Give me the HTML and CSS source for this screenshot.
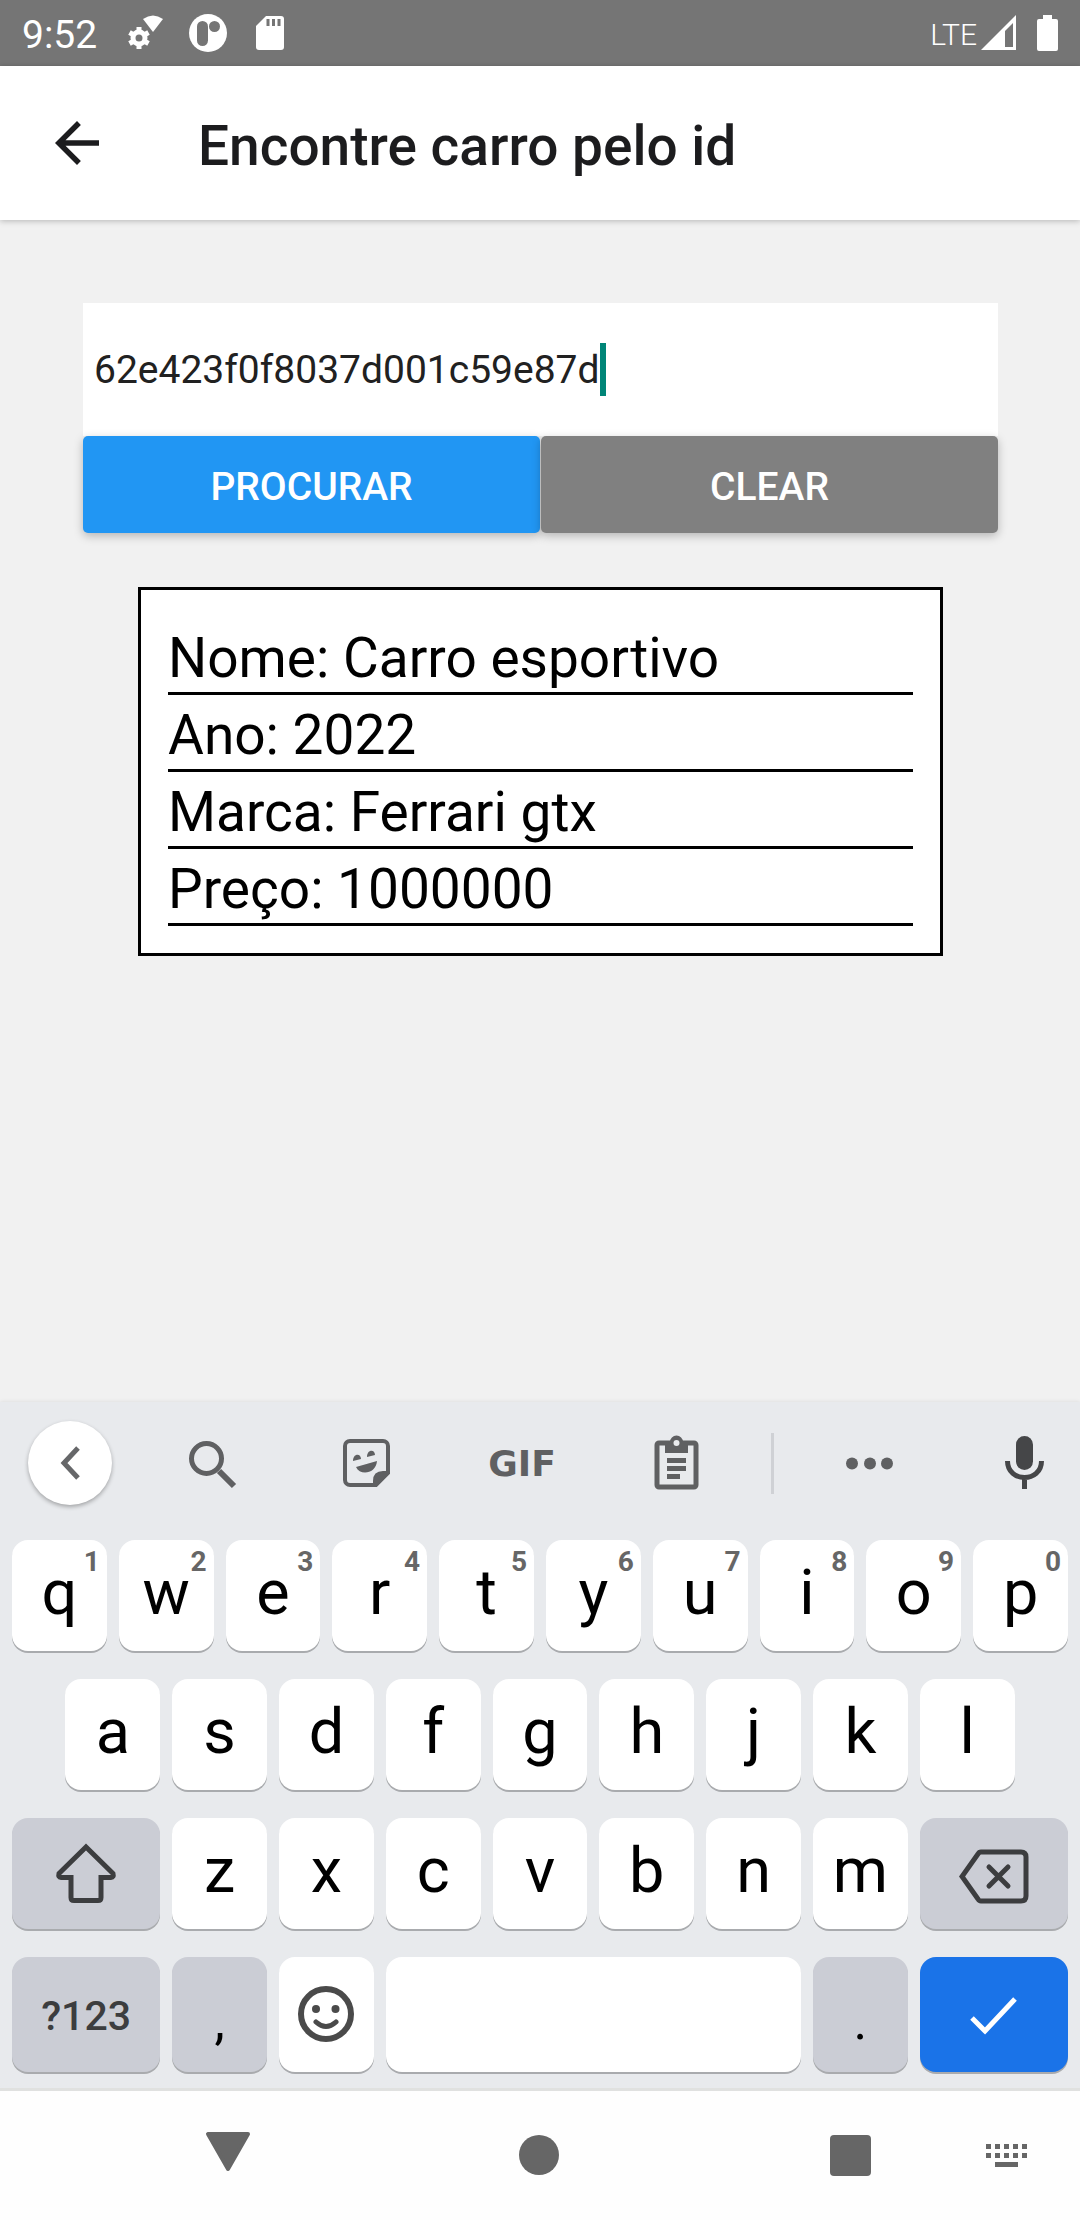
FILE: index.html
```html
<!DOCTYPE html>
<html lang="pt-BR">
<head>
  <meta charset="utf-8">
  <meta name="viewport" content="width=device-width, initial-scale=1">
  <title>Encontre carro pelo id</title>
  <link rel="stylesheet" href="styles.css">
</head>
<body>
  <div class="status-bar">
    <span class="clock">9:52</span>
    <div class="notifications">
      <svg width="38" height="38" viewBox="0 0 38 38" fill="#fff" aria-hidden="true">
        <path d="M15 5Q25-2 35 5L25 18z"/>
        <circle cx="11" cy="24" r="6" fill="none" stroke="#fff" stroke-width="5"/>
        <path d="M11 13v4M11 31v4M1.500 18.500l3.500 2M17 27.500l3.500 2M20.500 18.500l-3.500 2M5 27.500l-3.500 2" stroke="#fff" stroke-width="5"/>
      </svg>
      <svg width="38" height="38" viewBox="0 0 38 38" aria-hidden="true">
        <circle cx="19" cy="19" r="19" fill="#fff"/>
        <rect x="8" y="7" width="11" height="25" rx="5.500" fill="#757575"/>
        <circle cx="25.500" cy="12.500" r="5.500" fill="#757575"/>
      </svg>
      <svg width="38" height="38" viewBox="0 0 38 38" aria-hidden="true">
        <path d="M16 2h15a3 3 0 0 1 3 3v28a3 3 0 0 1-3 3H9a3 3 0 0 1-3-3V12z" fill="#fff"/>
        <path d="M16.500 5h3v7h-3zM22 5h3v7h-3zM27.500 5h3v7h-3z" fill="#757575"/>
      </svg>
    </div>
    <span class="network">LTE</span>
    <svg width="36" height="36" viewBox="0 0 36 36" aria-hidden="true">
      <path d="M35 0v35H0zM32 8l-8 8v16h8z" fill="#fff" fill-rule="evenodd"/>
    </svg>
    <svg class="battery" width="21" height="36" viewBox="0 0 21 36" aria-hidden="true">
      <path d="M6 0h9v4h4a2 2 0 0 1 2 2v28a2 2 0 0 1-2 2H2a2 2 0 0 1-2-2V6a2 2 0 0 1 2-2h4z" fill="#fff"/>
    </svg>
  </div>

  <header class="app-bar">
    <button class="back" type="button" aria-label="Voltar">
      <svg width="66" height="66" viewBox="0 0 24 24" fill="#1c1c1e" aria-hidden="true"><path d="M20 11H7.830l5.590-5.590L12 4l-8 8 8 8 1.410-1.410L7.830 13H20v-2z"/></svg>
    </button>
    <h1>Encontre carro pelo id</h1>
  </header>

  <main>
    <form class="search">
      <label class="field">
        <input type="text" name="id" size="24" value="62e423f0f8037d001c59e87d" aria-label="Id do carro">
        <span class="caret"></span>
      </label>
      <div class="actions">
        <button class="find" type="button">PROCURAR</button>
        <button class="clear" type="reset">CLEAR</button>
      </div>
    </form>
    <section class="car">
      <p>Nome: Carro esportivo</p>
      <p>Ano: 2022</p>
      <p>Marca: Ferrari gtx</p>
      <p>Preço: 1000000</p>
    </section>
  </main>

  <div class="keyboard">
    <div class="toolbar">
      <button class="tool collapse" type="button" aria-label="Recolher">
        <svg width="84" height="84" viewBox="0 0 84 84" aria-hidden="true"><path d="M50 27L36 42l14 15" fill="none" stroke="#666769" stroke-width="5"/></svg>
      </button>
      <div class="tools">
        <button class="tool" type="button" aria-label="Pesquisar">
          <svg width="84" height="84" viewBox="0 0 84 84" fill="none" stroke="#5f6062" aria-hidden="true"><circle cx="36.500" cy="37.500" r="15" stroke-width="5"/><path d="M49 50l15 15" stroke-width="6"/></svg>
        </button>
        <button class="tool" type="button" aria-label="Figurinhas">
          <svg width="84" height="84" viewBox="0 0 84 84" aria-hidden="true">
            <path d="M25 20h33a5 5 0 0 1 5 5v27L51 64H25a5 5 0 0 1-5-5V25a5 5 0 0 1 5-5z" fill="none" stroke="#5f6062" stroke-width="4"/>
            <path d="M48 65v-5q0-10 10-10h6v3L52 65zM28 40c0-8 8-8 8-2zM42 36c0-8 8-8 8-2zM31 46l21-6c-1 13-17 15-21 6z" fill="#5f6062"/>
          </svg>
        </button>
        <button class="tool gif" type="button">GIF</button>
        <button class="tool" type="button" aria-label="Área de transferência">
          <svg width="84" height="84" viewBox="0 0 84 84" aria-hidden="true">
            <rect x="22" y="22" width="39" height="44" rx="2" fill="none" stroke="#5f6062" stroke-width="5"/>
            <path d="M30 21h5a6.500 6.500 0 0 1 13 0h5v11H30zM32 37h19v5H32zM32 45h19v5H32zM32 53h13v5H32z" fill="#5f6062"/>
            <circle cx="41.500" cy="22" r="3" fill="#e8eaed"/>
          </svg>
        </button>
      </div>
      <span class="divider"></span>
      <button class="tool more" type="button" aria-label="Mais">
        <svg width="84" height="84" viewBox="0 0 84 84" fill="#5f6062" aria-hidden="true"><circle cx="24" cy="42.500" r="6"/><circle cx="42" cy="42.500" r="6"/><circle cx="59" cy="42.500" r="6"/></svg>
      </button>
      <button class="tool mic" type="button" aria-label="Voz">
        <svg width="84" height="84" viewBox="0 0 84 84" aria-hidden="true"><rect x="34" y="15" width="17" height="34" rx="8.500" fill="#454648"/><path d="M25.500 40c0 22 34 22 34 0M42.500 57v11" fill="none" stroke="#454648" stroke-width="5"/></svg>
      </button>
    </div>

    <div class="keys">
      <button class="key" type="button">q<sup>1</sup></button>
      <button class="key" type="button">w<sup>2</sup></button>
      <button class="key" type="button">e<sup>3</sup></button>
      <button class="key" type="button">r<sup>4</sup></button>
      <button class="key" type="button">t<sup>5</sup></button>
      <button class="key" type="button">y<sup>6</sup></button>
      <button class="key" type="button">u<sup>7</sup></button>
      <button class="key" type="button">i<sup>8</sup></button>
      <button class="key" type="button">o<sup>9</sup></button>
      <button class="key" type="button">p<sup>0</sup></button>

      <button class="key indent" type="button">a</button>
      <button class="key" type="button">s</button>
      <button class="key" type="button">d</button>
      <button class="key" type="button">f</button>
      <button class="key" type="button">g</button>
      <button class="key" type="button">h</button>
      <button class="key" type="button">j</button>
      <button class="key" type="button">k</button>
      <button class="key" type="button">l</button>

      <button class="key wide dim row-start" type="button" aria-label="Shift">
        <svg width="66" height="66" viewBox="0 0 66 66" aria-hidden="true"><path d="M33 6L6 32.500q-1 4 2 4h10v20q0 3 3 3h24q3 0 3-3v-20h10q3 0 2-4z" fill="none" stroke="#3c3d3f" stroke-width="5"/></svg>
      </button>
      <button class="key" type="button">z</button>
      <button class="key" type="button">x</button>
      <button class="key" type="button">c</button>
      <button class="key" type="button">v</button>
      <button class="key" type="button">b</button>
      <button class="key" type="button">n</button>
      <button class="key" type="button">m</button>
      <button class="key wide dim" type="button" aria-label="Apagar">
        <svg width="70" height="66" viewBox="0 0 70 66" fill="none" stroke="#3c3d3f" aria-hidden="true"><path d="M22 11h40q5 0 5 5v39q0 5-5 5H22q-2 0-3-2L3 35.500l16-22.500q1-2 3-2z" stroke-width="5"/><path d="M30 26l19 19M49 26L30 45" stroke-width="5" stroke-linecap="round"/></svg>
      </button>

      <button class="key wide dim symbols row-start" type="button">?123</button>
      <button class="key dim punct" type="button">,</button>
      <button class="key" type="button" aria-label="Emoji">
        <svg width="58" height="62" viewBox="0 0 58 62" aria-hidden="true"><circle cx="29" cy="33" r="25" fill="none" stroke="#4a4a4a" stroke-width="6"/><circle cx="19" cy="28" r="4" fill="#4a4a4a"/><circle cx="38.500" cy="28" r="4" fill="#4a4a4a"/><path d="M19 41q10 9 20 0" fill="none" stroke="#4a4a4a" stroke-width="5" stroke-linecap="round"/></svg>
      </button>
      <button class="key space" type="button" aria-label="Espaço"></button>
      <button class="key dim punct" type="button">.</button>
      <button class="key wide enter" type="button" aria-label="Concluir">
        <svg width="66" height="66" viewBox="0 0 66 66" aria-hidden="true"><path d="M11 36l13 13 30-32" fill="none" stroke="#fff" stroke-width="5"/></svg>
      </button>
    </div>
  </div>

  <nav class="system-nav">
    <div class="nav-main">
      <button type="button" aria-label="Voltar">
        <svg width="78" height="78" viewBox="0 0 78 78" aria-hidden="true"><path d="M19 17h40L39 52z" fill="#666" stroke="#666" stroke-width="4" stroke-linejoin="round"/></svg>
      </button>
      <button type="button" aria-label="Início">
        <svg width="78" height="78" viewBox="0 0 78 78" aria-hidden="true"><circle cx="39" cy="38" r="20" fill="#666"/></svg>
      </button>
      <button type="button" aria-label="Recentes">
        <svg width="78" height="78" viewBox="0 0 78 78" aria-hidden="true"><rect x="19" y="18" width="41" height="41" rx="4" fill="#666"/></svg>
      </button>
    </div>
    <button type="button" aria-label="Teclado">
      <svg width="78" height="78" viewBox="0 0 78 78" fill="#666" aria-hidden="true"><path d="M18 27h5v5h-5zM27 27h5v5h-5zM36 27h5v5h-5zM45 27h5v5h-5zM54 27h5v5h-5zM18 36h5v5h-5zM27 36h5v5h-5zM36 36h5v5h-5zM45 36h5v5h-5zM54 36h5v5h-5zM27 45h23v5H27z"/></svg>
    </button>
  </nav>
</body>
</html>
```

FILE: styles.css
```css
* {
  box-sizing: border-box;
}

body {
  display: flex;
  flex-direction: column;
  min-height: 100vh;
  margin: 0;
  background: #f1f1f1;
  color: #000;
  font-family: Roboto, "Liberation Sans", sans-serif;
}

button,
input {
  margin: 0;
  padding: 0;
  border: 0;
  background: none;
  color: inherit;
  font: inherit;
}

svg {
  display: block;
  flex: none;
}

/* Status bar */
.status-bar {
  display: flex;
  align-items: center;
  height: 66px;
  padding: 0 22px;
  background: #757575;
  color: #fff;
}

.clock {
  padding-top: 3px;
  font-size: 39px;
}

.notifications {
  display: flex;
  flex: 1;
  gap: 23px;
  margin-left: 31px;
}

.network {
  margin-right: 4px;
  padding-top: 3px;
  font-size: 30px;
  font-weight: 300;
}

.battery {
  margin-left: 20px;
}

/* App bar */
.app-bar {
  display: flex;
  align-items: center;
  gap: 88px;
  height: 154px;
  padding: 0 44px;
  background: #fff;
  box-shadow: 0 1px 6px rgba(0, 0, 0, 0.25);
}

h1 {
  margin: 0;
  padding-top: 6px;
  color: #1c1c1e;
  font-size: 55px;
  font-weight: 500;
}

/* Content */
main {
  flex: 1;
  padding: 83px 82px 83px 83px;
}

.field {
  display: flex;
  align-items: center;
  height: 133px;
  padding: 0 11px;
  background: #fff;
}

.field input {
  field-sizing: content;
  outline: none;
  color: #212121;
  font-size: 39px;
}

.caret {
  width: 6px;
  height: 53px;
  background: #008577;
}

.actions {
  display: grid;
  grid-template-columns: 1fr 1fr;
  gap: 1px;
}

.actions button {
  height: 97px;
  padding-top: 4px;
  border-radius: 5px;
  box-shadow: 0 3px 10px rgba(0, 0, 0, 0.25);
  color: #fff;
  font-size: 39px;
  font-weight: 500;
}

.find {
  background: #2196f3;
}

.actions .clear {
  background: #808080;
}

.car {
  margin: 54px 55px 0;
  padding: 28px 27px 27px;
  border: 3px solid #000;
  background: #fff;
}

.car p {
  margin: 0;
  padding-top: 6px;
  border-bottom: 3px solid #000;
  font-size: 55px;
  line-height: 68px;
}

/* Keyboard */
.keyboard {
  padding-bottom: 16px;
  border-bottom: 3px solid #e0e1e0;
  background: #e8eaed;
  box-shadow: 0 0 4px rgba(0, 0, 0, 0.1);
}

.toolbar {
  display: flex;
  align-items: center;
  height: 122px;
  margin-bottom: 16px;
  padding: 0 14px 0 28px;
}

.tool {
  flex: none;
  width: 84px;
  height: 84px;
}

.collapse {
  border-radius: 50%;
  background: #fff;
  box-shadow: 0 2px 4px rgba(0, 0, 0, 0.3);
}

.tools {
  display: flex;
  flex: 1;
  justify-content: space-between;
  margin: 0 52px 0 58px;
}

.gif {
  color: #5f6062;
  font-family: "DejaVu Sans", sans-serif;
  font-size: 36px;
  font-weight: 700;
}

.divider {
  width: 3px;
  height: 61px;
  background: #cfd1d5;
}

.more {
  margin: 0 70px 0 54px;
}

.keys {
  display: grid;
  grid-template-columns: repeat(20, 1fr);
  grid-template-rows: repeat(3, 111px) 115px;
  gap: 28px 12px;
  padding: 0 12px;
}

.key {
  position: relative;
  display: flex;
  grid-column-end: span 2;
  align-items: center;
  justify-content: center;
  min-width: 0;
  padding-bottom: 5px;
  border-radius: 16px;
  background: #fff;
  box-shadow: 0 2px 0 #a9abae;
  font-size: 63px;
  line-height: 74px;
}

.key sup {
  position: absolute;
  top: 8px;
  right: 7px;
  color: #666;
  font-size: 28px;
  font-weight: 700;
  line-height: 28px;
}

.key.indent {
  grid-column-start: 2;
}

.key.row-start {
  grid-column-start: 1;
}

.key.wide {
  grid-column-end: span 3;
  padding-bottom: 0;
}

.key.space {
  grid-column-end: span 8;
}

.key.dim {
  background: #cbcdd5;
}

.key.symbols {
  padding-top: 3px;
  color: #3c3d3f;
  font-size: 41px;
  font-weight: 500;
}

.key.punct {
  padding: 15px 0 0;
  font-size: 52px;
}

.key.enter {
  background: #1a73e8;
}

/* System navigation */
.system-nav {
  display: flex;
  align-items: center;
  height: 129px;
  padding: 0 34px 0 189px;
  background: #fefefe;
}

.nav-main {
  display: flex;
  flex: 1;
  justify-content: space-between;
  margin-right: 79px;
}
```
